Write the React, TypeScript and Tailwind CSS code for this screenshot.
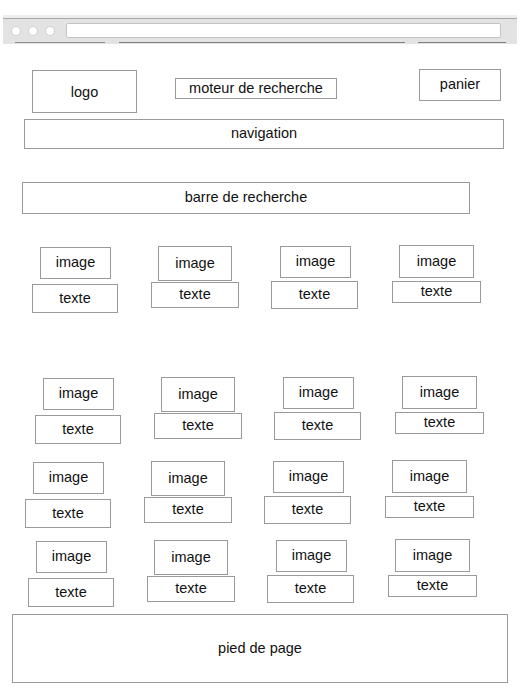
import React from 'react';

const font = "font-['Liberation_Sans',Arial,sans-serif]";

interface Col {
  wrap: string;
  image: string;
  texte: string;
}

// one entry per column, same shape in every grid row
const cols: Col[] = [
  { wrap: 'w-[119px] pt-[2px]', image: 'ml-[8px] w-[71px] h-[32px]', texte: 'mt-[5px] w-[86px] h-[29px]' },
  { wrap: 'w-[120px] pt-[1px]', image: 'ml-[7px] w-[74px] h-[35px]', texte: 'mt-[1px] w-[88px] h-[26px]' },
  { wrap: 'w-[121px] pt-[1px]', image: 'ml-[9px] w-[71px] h-[32px]', texte: 'mt-[3px] w-[87px] h-[28px]' },
  { wrap: 'w-[120px] pt-0', image: 'ml-[7px] w-[75px] h-[33px]', texte: 'mt-[3px] w-[89px] h-[22px]' },
];

const rows = [
  'mt-[31px] pl-[32px]',
  'mt-[63px] pl-[35px]',
  'mt-[16px] pl-[25px]',
  'mt-[11px] pl-[28px]',
];

const Box: React.FC<{ className: string; children: React.ReactNode }> = ({ className, children }) => (
  <div className={`flex items-center justify-center border border-[#9a9a9a] bg-white text-[14.5px] text-[#111] ${className}`}>
    {children}
  </div>
);

const BrowserBar = () => (
  <div className="mx-[3px] mt-[15px]">
    <div className="h-[3px] bg-[#ededed]" />
    <div className="flex h-[24px] items-center gap-[7px] border-t border-[#a8a8a8] bg-[#e3e3e3] pl-[8px] pr-[16px]">
      <span className="h-[10px] w-[10px] rounded-full border border-[#d0d0d0] bg-white" />
      <span className="h-[10px] w-[10px] rounded-full border border-[#d0d0d0] bg-white" />
      <span className="h-[10px] w-[10px] rounded-full border border-[#d0d0d0] bg-white" />
      <div className="ml-[4px] h-[15px] flex-1 rounded-[2px] border border-[#c4c4c4] bg-white" />
    </div>
    <div className="flex h-[2px] bg-[#e3e3e3]">
      <span className="ml-[12px] w-[90px] border-t border-[#8f8f8f]" />
      <span className="ml-[14px] w-[286px] border-t border-[#7f7f7f]" />
      <span className="ml-[13px] w-[88px] border-t border-[#7f7f7f]" />
    </div>
  </div>
);

export default function App() {
  return (
    <div className={`h-[700px] w-[520px] overflow-hidden bg-white ${font}`}>
      <BrowserBar />

      <div className="mt-[25px] flex items-start">
        <Box className="ml-[32px] mt-[1px] h-[43px] w-[105px] pt-[2px]">logo</Box>
        <Box className="ml-[38px] mt-[9px] h-[21px] w-[162px]">moteur de recherche</Box>
        <Box className="ml-[82px] mt-0 h-[32px] w-[82px]">panier</Box>
      </div>

      <Box className="ml-[24px] mt-[6px] h-[30px] w-[480px]">navigation</Box>
      <Box className="ml-[22px] mt-[33px] h-[32px] w-[448px]">barre de recherche</Box>

      {rows.map((row, r) => (
        <div key={r} className={`flex items-start ${row}`}>
          {cols.map((c, i) => (
            <div key={i} className={`flex flex-col items-start ${c.wrap}`}>
              <Box className={c.image}>image</Box>
              <Box className={c.texte}>texte</Box>
            </div>
          ))}
        </div>
      ))}

      <Box className="ml-[12px] mt-[7px] h-[69px] w-[496px]">pied de page</Box>
    </div>
  );
}
